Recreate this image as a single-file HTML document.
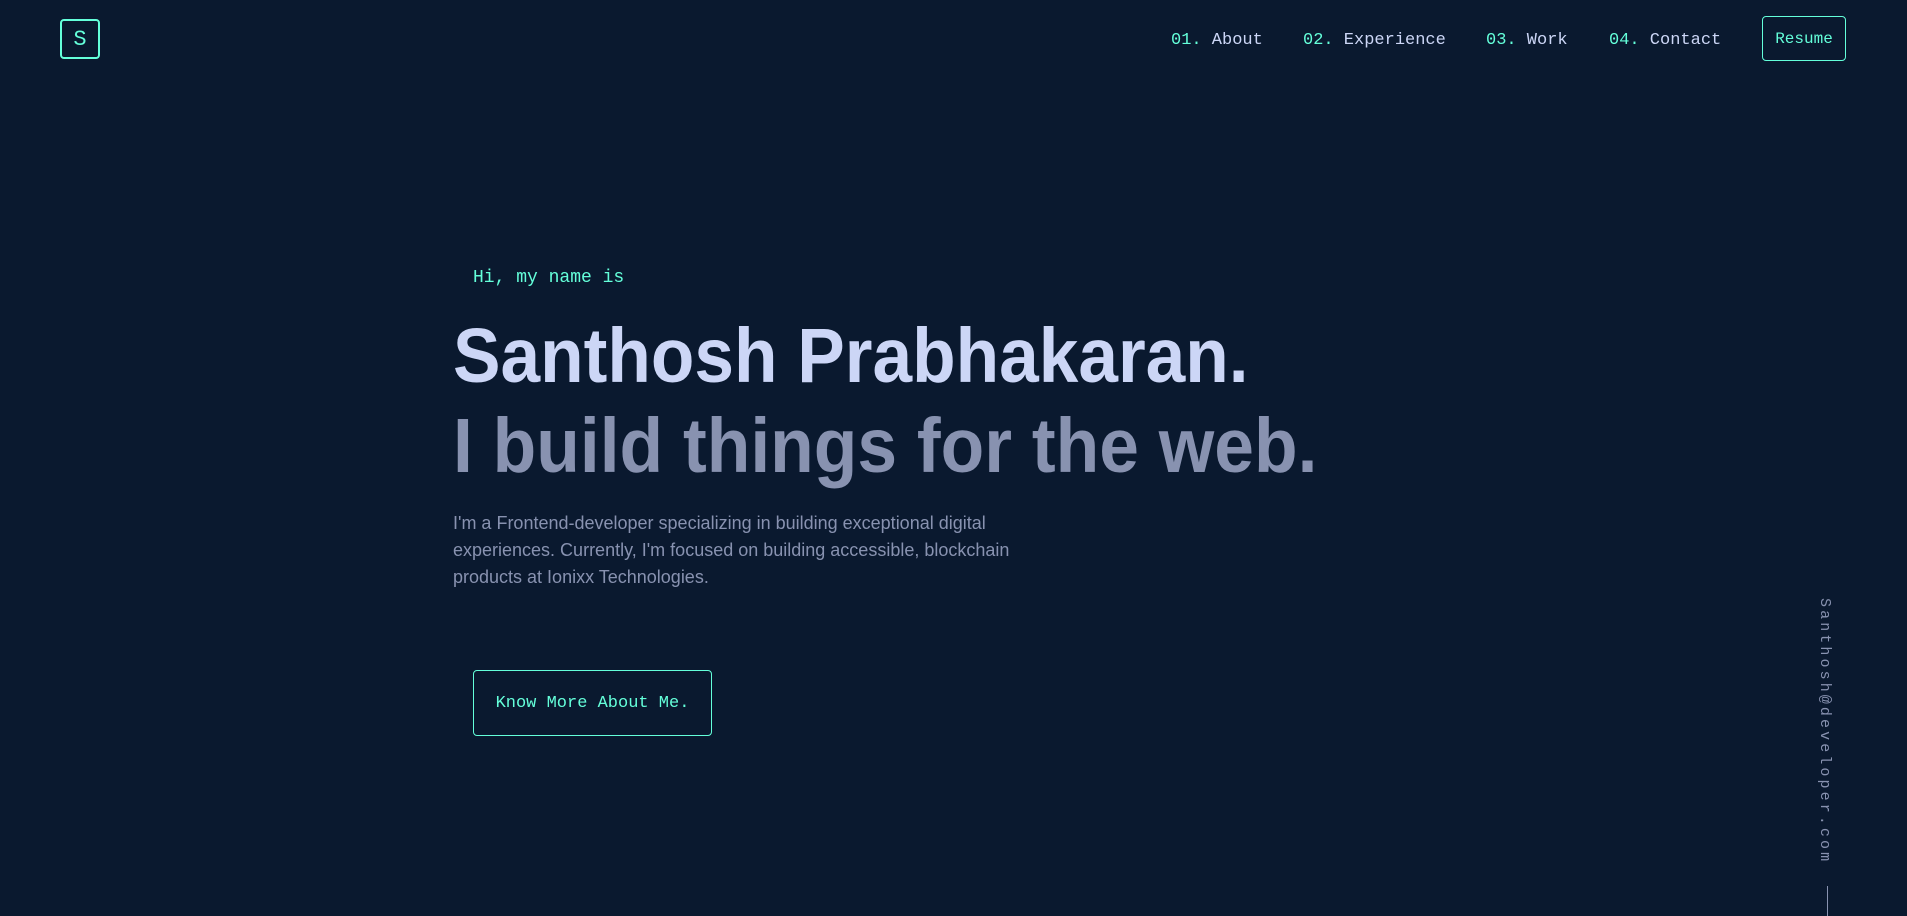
<!DOCTYPE html>
<html><head><style>
*{margin:0;padding:0;box-sizing:border-box}
body{width:1907px;height:913px;background:#0a192f;position:relative;overflow:hidden;font-family:"Liberation Sans",sans-serif}
.mono{font-family:"Liberation Mono",monospace}
.logo{position:absolute;left:60px;top:19px;width:40px;height:40px;border:2px solid #64ffda;border-radius:4px;color:#64ffda;font-size:22px;display:flex;align-items:center;justify-content:center}
.nav{position:absolute;top:31px;font-size:17px;color:#ccd6f6;white-space:nowrap}
.nav span{color:#64ffda}
.resume{position:absolute;left:1762px;top:16px;width:84px;height:45px;border:1.5px solid #64ffda;border-radius:4px;color:#64ffda;font-size:16px;display:flex;align-items:center;justify-content:center}
.hi{position:absolute;left:473px;top:268px;color:#64ffda;font-size:18px}
.h{position:absolute;left:453px;font-weight:bold;font-size:77px;white-space:nowrap;transform-origin:left top}
.p{position:absolute;left:453px;top:510px;width:600px;color:#8892b0;font-size:18px;line-height:27px}
.btn{position:absolute;left:473px;top:670px;width:239px;height:66px;border:1.5px solid #64ffda;border-radius:4px;color:#64ffda;font-size:17px;display:flex;align-items:center;justify-content:center}
.email{position:absolute;left:1816px;top:598px;writing-mode:vertical-rl;color:#8892b0;font-size:15px;letter-spacing:3.1px}
.line{position:absolute;left:1827px;top:886px;width:1px;height:30px;background:#8892b0}
</style></head><body>
<div class="logo mono">S</div>
<div class="nav mono" style="left:1171px"><span>01.</span> About</div>
<div class="nav mono" style="left:1303px"><span>02.</span> Experience</div>
<div class="nav mono" style="left:1486px"><span>03.</span> Work</div>
<div class="nav mono" style="left:1609px"><span>04.</span> Contact</div>
<div class="resume mono">Resume</div>
<div class="hi mono">Hi, my name is</div>
<div class="h" style="top:312px;color:#ccd6f6;transform:scaleX(0.925)">Santhosh Prabhakaran.</div>
<div class="h" style="top:402px;color:#8892b0;transform:scaleX(0.927)">I build things for the web.</div>
<div class="p">I'm a Frontend-developer specializing in building exceptional digital experiences. Currently, I'm focused on building accessible, blockchain products at Ionixx Technologies.</div>
<div class="btn mono">Know More About Me.</div>
<div class="email mono">Santhosh@developer.com</div>
<div class="line"></div>
</body></html>
